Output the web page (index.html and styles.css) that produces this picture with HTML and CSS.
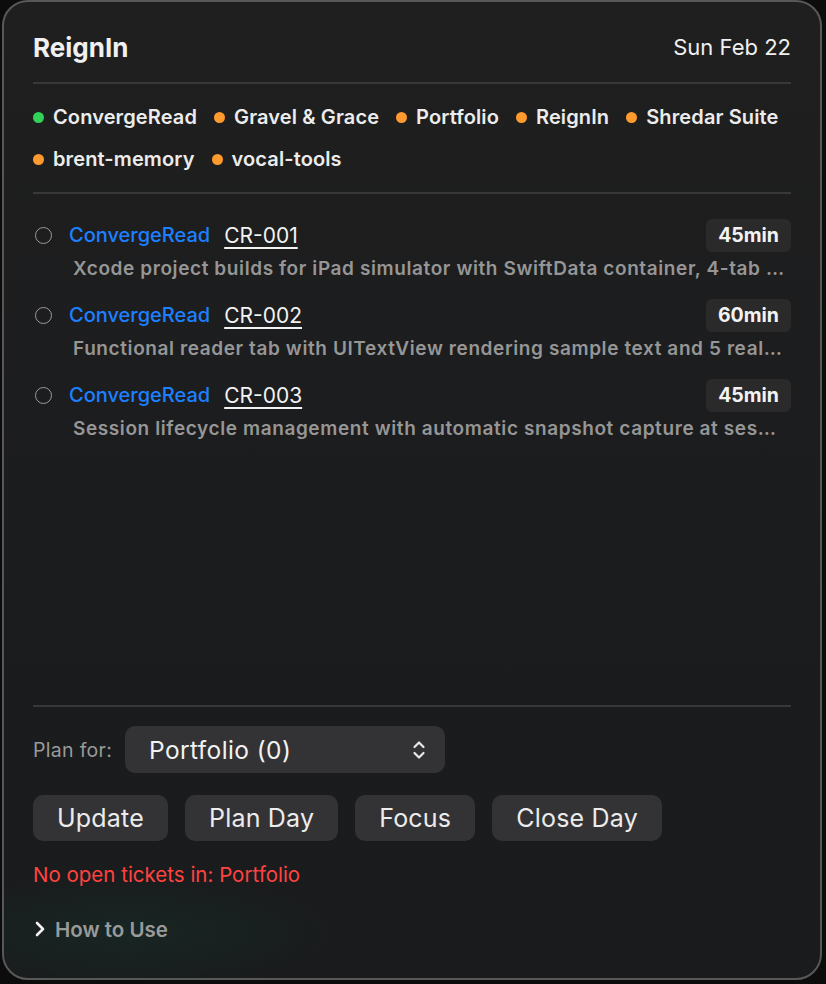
FILE: index.html
```html
<!DOCTYPE html>
<html>
<head>
    <title>ReignIn</title>
    <link rel="stylesheet" href="styles.css">
</head>
<body>
    <div class="panel">
        <div class="header">
            <h1 class="title">ReignIn</h1>
            <span class="date">Sun Feb 22</span>
        </div>

        <div class="projects">
            <span class="project"><i class="dot green"></i>ConvergeRead</span>
            <span class="project"><i class="dot"></i>Gravel &amp; Grace</span>
            <span class="project"><i class="dot"></i>Portfolio</span>
            <span class="project"><i class="dot"></i>ReignIn</span>
            <span class="project"><i class="dot"></i>Shredar Suite</span>
            <span class="project"><i class="dot"></i>brent-memory</span>
            <span class="project"><i class="dot"></i>vocal-tools</span>
        </div>

        <div class="tickets">
            <div class="ticket">
                <div class="ticket-head">
                    <span class="check"></span>
                    <span class="ticket-project">ConvergeRead</span>
                    <span class="ticket-id">CR-001</span>
                    <span class="badge">45min</span>
                </div>
                <div class="ticket-desc">Xcode project builds for iPad simulator with SwiftData container, 4-tab navigation and placeholder views</div>
            </div>
            <div class="ticket">
                <div class="ticket-head">
                    <span class="check"></span>
                    <span class="ticket-project">ConvergeRead</span>
                    <span class="ticket-id">CR-002</span>
                    <span class="badge">60min</span>
                </div>
                <div class="ticket-desc">Functional reader tab with UITextView rendering sample text and 5 real-time controls</div>
            </div>
            <div class="ticket">
                <div class="ticket-head">
                    <span class="check"></span>
                    <span class="ticket-project">ConvergeRead</span>
                    <span class="ticket-id">CR-003</span>
                    <span class="badge">45min</span>
                </div>
                <div class="ticket-desc">Session lifecycle management with automatic snapshot capture at session end</div>
            </div>
        </div>

        <div class="footer">
            <div class="plan-row">
                <span class="plan-label">Plan for:</span>
                <div class="select">
                    <span>Portfolio (0)</span>
                    <svg class="updown" width="14" height="22" viewBox="0 0 14 22">
                        <path d="M2.5 8 L7 3.5 L11.5 8" fill="none" stroke="#e8e8e8" stroke-width="2.2" stroke-linecap="round" stroke-linejoin="round"/>
                        <path d="M2.5 14 L7 18.5 L11.5 14" fill="none" stroke="#e8e8e8" stroke-width="2.2" stroke-linecap="round" stroke-linejoin="round"/>
                    </svg>
                </div>
            </div>

            <div class="actions">
                <button>Update</button>
                <button>Plan Day</button>
                <button>Focus</button>
                <button>Close Day</button>
            </div>

            <div class="error">No open tickets in: Portfolio</div>

            <div class="howto">
                <svg width="12" height="18" viewBox="0 0 12 18">
                    <path d="M3 3 L9 9 L3 15" fill="none" stroke="#f2f2f2" stroke-width="2.6" stroke-linecap="round" stroke-linejoin="round"/>
                </svg>
                <span>How to Use</span>
            </div>
        </div>
    </div>
</body>
</html>
```

FILE: styles.css
```css
/* ReignIn popover */
body {
    margin: 0;
    background: #0c0c0c;
    font-family: Inter, "Noto Sans", sans-serif;
    color: #ececec;
}

.panel {
    box-sizing: border-box;
    height: 980px;
    margin: 0 4px 0 2px;
    padding: 0 29px 37px;
    border: 2px solid #585858;
    border-radius: 26px;
    background: radial-gradient(ellipse 220px 60px at 120px 930px, rgba(20, 50, 42, 0.45), transparent),
                linear-gradient(#1f1f1f, #1b1c1e 60%, #1a1b1d);
    display: flex;
    flex-direction: column;
}

.header {
    display: flex;
    justify-content: space-between;
    align-items: center;
    height: 34px;
    padding-top: 28px;
    padding-bottom: 18px;
    border-bottom: 2px solid #383838;
}

.title {
    margin: 0;
    font-size: 26px;
    font-weight: 700;
    color: #f0f0f0;
}

.date {
    font-size: 22px;
    color: #f0f0f0;
}

.projects {
    display: flex;
    flex-wrap: wrap;
    column-gap: 17px;
    padding: 12px 0;
    border-bottom: 2px solid #383838;
}

.project {
    display: flex;
    align-items: center;
    height: 42px;
    font-size: 20px;
    font-weight: 600;
    letter-spacing: 0.12px;
    color: #ececec;
}

.dot {
    width: 11px;
    height: 11px;
    border-radius: 50%;
    background: #ff9a2e;
    margin-right: 9px;
}

.dot.green {
    background: #32d157;
}

.tickets {
    padding-top: 24px;
}

.ticket {
    margin-bottom: 17px;
}

.ticket-head {
    display: flex;
    align-items: center;
    height: 34px;
}

.check {
    box-sizing: border-box;
    width: 17px;
    height: 17px;
    margin: 0 17px 0 2px;
    border: 1.5px solid #9b9b9b;
    border-radius: 50%;
}

.ticket-project {
    font-size: 20px;
    font-weight: 500;
    color: #1d80ff;
    margin-right: 14px;
}

.ticket-id {
    font-size: 21px;
    color: #f2f2f2;
    text-decoration: underline;
    text-underline-offset: 4px;
    text-decoration-thickness: 1.5px;
}

.badge {
    margin-left: auto;
    height: 33px;
    line-height: 33px;
    padding: 0 12px;
    border-radius: 6px;
    background: #2a2a2b;
    font-size: 19.5px;
    font-weight: 700;
    color: #f2f2f2;
}

.ticket-desc {
    margin-top: 5px;
    padding: 0 5px 0 40px;
    height: 24px;
    line-height: 24px;
    font-size: 19px;
    font-weight: 600;
    letter-spacing: 0.6px;
    color: #969696;
    white-space: nowrap;
    overflow: hidden;
    text-overflow: ellipsis;
}

.footer {
    margin-top: auto;
    border-top: 2px solid #383838;
}

.plan-row {
    display: flex;
    align-items: center;
    margin-top: 19px;
}

.plan-label {
    width: 92px;
    font-size: 19.5px;
    letter-spacing: 0.3px;
    color: #9a9a9a;
}

.select {
    box-sizing: border-box;
    display: flex;
    align-items: center;
    justify-content: space-between;
    width: 320px;
    height: 47px;
    padding: 0 19px 0 24px;
    border-radius: 10px;
    background: #333335;
    font-size: 24.5px;
    letter-spacing: 0.4px;
    color: #f2f2f2;
}

.actions {
    display: flex;
    gap: 17px;
    margin-top: 22px;
}

.actions button {
    height: 46px;
    padding: 0 24px;
    border: none;
    border-radius: 10px;
    background: #333335;
    font-family: inherit;
    font-size: 25px;
    letter-spacing: 0.2px;
    color: #ececec;
}

.error {
    margin-top: 22px;
    line-height: 24px;
    font-size: 20.5px;
    color: #ff4340;
}

.howto {
    display: flex;
    align-items: center;
    gap: 9px;
    margin-top: 30px;
    height: 24px;
    padding-left: 1px;
    font-size: 20.5px;
    font-weight: 600;
    color: #9a9a9a;
}
```
